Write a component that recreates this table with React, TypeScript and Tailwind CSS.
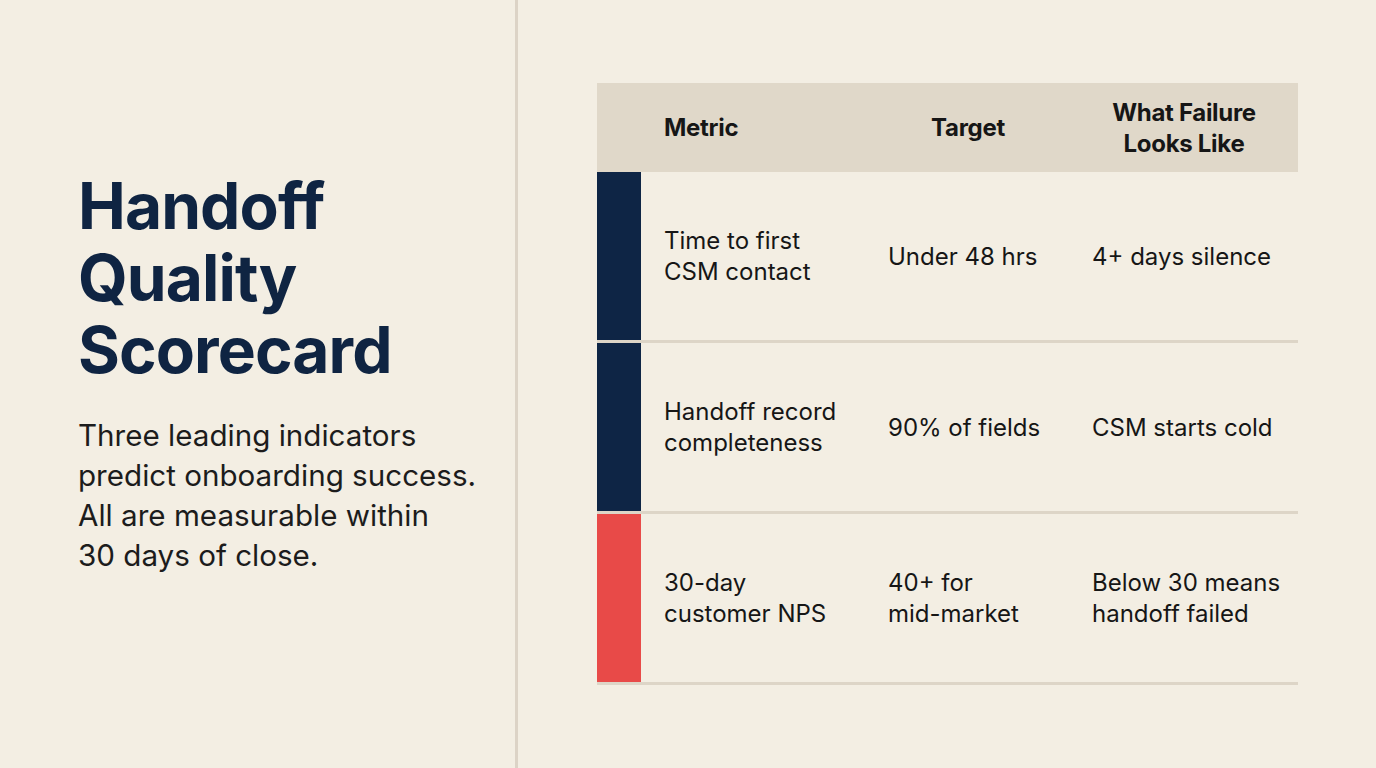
const rows = [
  { bar: "bg-[#0e2545]", metric: ["Time to first", "CSM contact"], target: ["Under 48 hrs"], fail: ["4+ days silence"] },
  { bar: "bg-[#0e2545]", metric: ["Handoff record", "completeness"], target: ["90% of fields"], fail: ["CSM starts cold"] },
  { bar: "bg-[#e84a48]", metric: ["30-day", "customer NPS"], target: ["40+ for", "mid-market"], fail: ["Below 30 means", "handoff failed"] },
]

function Lines({ lines }: { lines: string[] }) {
  return (
    <div>
      {lines.map((l) => (
        <div key={l}>{l}</div>
      ))}
    </div>
  )
}

export default function App() {
  return (
    <div className="w-[1376px] h-[768px] bg-[#f3eee3] flex overflow-hidden font-['Inter',sans-serif]">
      {/* Left intro */}
      <div className="w-[515px] shrink-0 pl-[78px] pt-[170px]">
        <h1 className="text-[64px] leading-[72px] font-bold text-[#0f2442] tracking-[-0.9px]">
          Handoff
          <br />
          Quality
          <br />
          Scorecard
        </h1>
        <p className="mt-[29px] text-[29.6px] leading-[40px] text-[#1c1c1c]">
          Three leading indicators
          <br />
          predict onboarding success.
          <br />
          All are measurable within
          <br />
          30 days of close.
        </p>
      </div>

      <div className="w-[3px] shrink-0 bg-[#dcd3c6]" />

      {/* Table */}
      <div className="flex-1 pl-[79px] pt-[83px] text-[#161616]">
        <div className="w-[701px]">
          <div className="flex h-[89px] bg-[#e0d8c9] items-center text-[24px] leading-[31px] font-bold tracking-[-0.3px]">
            <div className="w-[44px] shrink-0" />
            <div className="w-[225px] pl-[23px]">Metric</div>
            <div className="w-[204px] text-center">Target</div>
            <div className="flex-1 text-center">
              What Failure
              <br />
              Looks Like
            </div>
          </div>
          {rows.map((r, i) => (
            <div key={i} className="flex h-[171px] border-b-[3px] border-[#ddd5c7] text-[24px] leading-[31px]">
              <div className={`w-[44px] shrink-0 ${r.bar}`} />
              <div className="w-[225px] pl-[23px] flex items-center">
                <Lines lines={r.metric} />
              </div>
              <div className="w-[204px] pl-[22px] flex items-center">
                <Lines lines={r.target} />
              </div>
              <div className="flex-1 pl-[22px] flex items-center">
                <Lines lines={r.fail} />
              </div>
            </div>
          ))}
        </div>
      </div>
    </div>
  )
}
